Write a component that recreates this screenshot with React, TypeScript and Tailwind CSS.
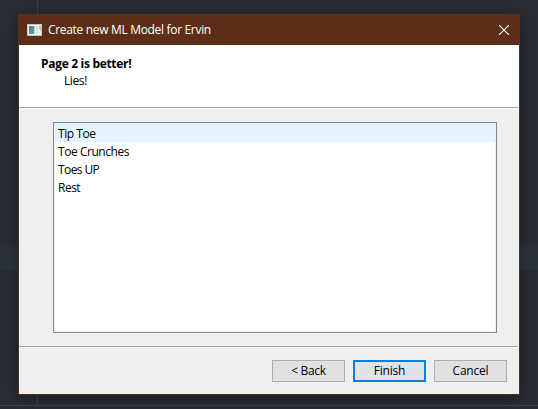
import React from "react";

const items = [
  { label: "Tip Toe", tracking: "tracking-[-0.45px]" },
  { label: "Toe Crunches", tracking: "tracking-[-0.45px]" },
  { label: "Toes UP", tracking: "tracking-[-0.6px]" },
  { label: "Rest", tracking: "tracking-[-0.5px]" },
];

function WindowIcon() {
  return (
    <svg width="15" height="12" viewBox="0 0 15 12" shapeRendering="crispEdges">
      <defs>
        <linearGradient id="pane" x1="0" y1="0" x2="0.6" y2="1">
          <stop offset="0" stopColor="#4a76a4" />
          <stop offset="1" stopColor="#58a97c" />
        </linearGradient>
      </defs>
      <rect width="15" height="12" fill="#c9c5c3" />
      <rect x="1" y="1" width="13" height="10" fill="#f3f3f3" />
      <rect x="2" y="2" width="5" height="8" fill="url(#pane)" />
      <rect x="7" y="2" width="1" height="8" fill="#b9cfcb" />
      <rect x="9" y="2" width="2" height="8" fill="#dcdcdf" />
      <rect x="12" y="2" width="2" height="3" fill="#a8cfc3" />
      <rect x="13" y="5" width="1" height="2" fill="#b5d6c3" />
    </svg>
  );
}

function Separator() {
  return <div className="mr-px h-[2px] shrink-0 border-t border-[#a0a0a0] bg-white" />;
}

export default function App() {
  return (
    <div className="relative h-[409px] w-[538px] overflow-hidden bg-[#282c34] font-['Open_Sans','Noto_Sans',sans-serif] text-[12px] leading-[18px] text-black">
      <div className="absolute top-0 left-[37px] h-[405px] w-px bg-[#3b4048]" />
      <div className="absolute top-[247px] left-0 h-[23px] w-full bg-[#2c323c]" />
      <div className="absolute top-[405px] left-0 h-[4px] w-full border-t border-[#3b4048] bg-[#282a36]" />

      <div className="absolute top-[14px] left-[18px] flex h-[381px] w-[502px] flex-col border-x border-b border-[#5d2e17] bg-[#efefef] shadow-[0_3px_14px_rgba(0,0,0,0.35)]">
        <div className="flex h-[31px] shrink-0 items-center bg-[#5d2e17] pl-2 text-white">
          <WindowIcon />
          <span className="ml-[6px] whitespace-nowrap tracking-[-0.32px]">Create new ML Model for Ervin</span>
          <svg className="mr-[10px] ml-auto" width="10" height="10" viewBox="0 0 10 10" stroke="#fff" strokeWidth="1.1">
            <path d="M0 0L10 10M10 0L0 10" />
          </svg>
        </div>
        <div className="h-[62px] shrink-0 bg-white pt-[10px] pl-[22px]">
          <div className="h-[17px] font-bold tracking-[-0.31px]">Page 2 is better!</div>
          <div className="pl-[23px] tracking-[-0.4px]">Lies!</div>
        </div>
        <Separator />
        <div className="mt-[13px] ml-[34px] h-[211px] w-[444px] shrink-0 border border-[#828790] bg-white">
          <ul className="h-full border border-t-0 border-[#eeeef2]">
            {items.map((item, i) => (
              <li key={item.label} className={i === 0 ? "h-[19px] bg-[#e5f3ff] pt-[2px] pl-[3px]" : "h-[18px] pt-px pl-[3px]"}>
                <span className={item.tracking}>{item.label}</span>
              </li>
            ))}
          </ul>
        </div>
        <div className="h-[13px] shrink-0" />
        <Separator />
        <div className="flex justify-end gap-2 pt-[12px] pr-[12px]">
          <button className="h-[22px] w-[73px] border border-[#adadad] bg-[#e1e1e1] leading-[20px] tracking-[-0.3px]">&lt; Back</button>
          <button className="h-[22px] w-[73px] border-2 border-[#0f7fdc] bg-[#dfe3e7] leading-[18px] tracking-[-0.2px]">Finish</button>
          <button className="h-[22px] w-[73px] border border-[#adadad] bg-[#e1e1e1] leading-[20px] tracking-[-0.2px]">Cancel</button>
        </div>
      </div>
    </div>
  );
}
